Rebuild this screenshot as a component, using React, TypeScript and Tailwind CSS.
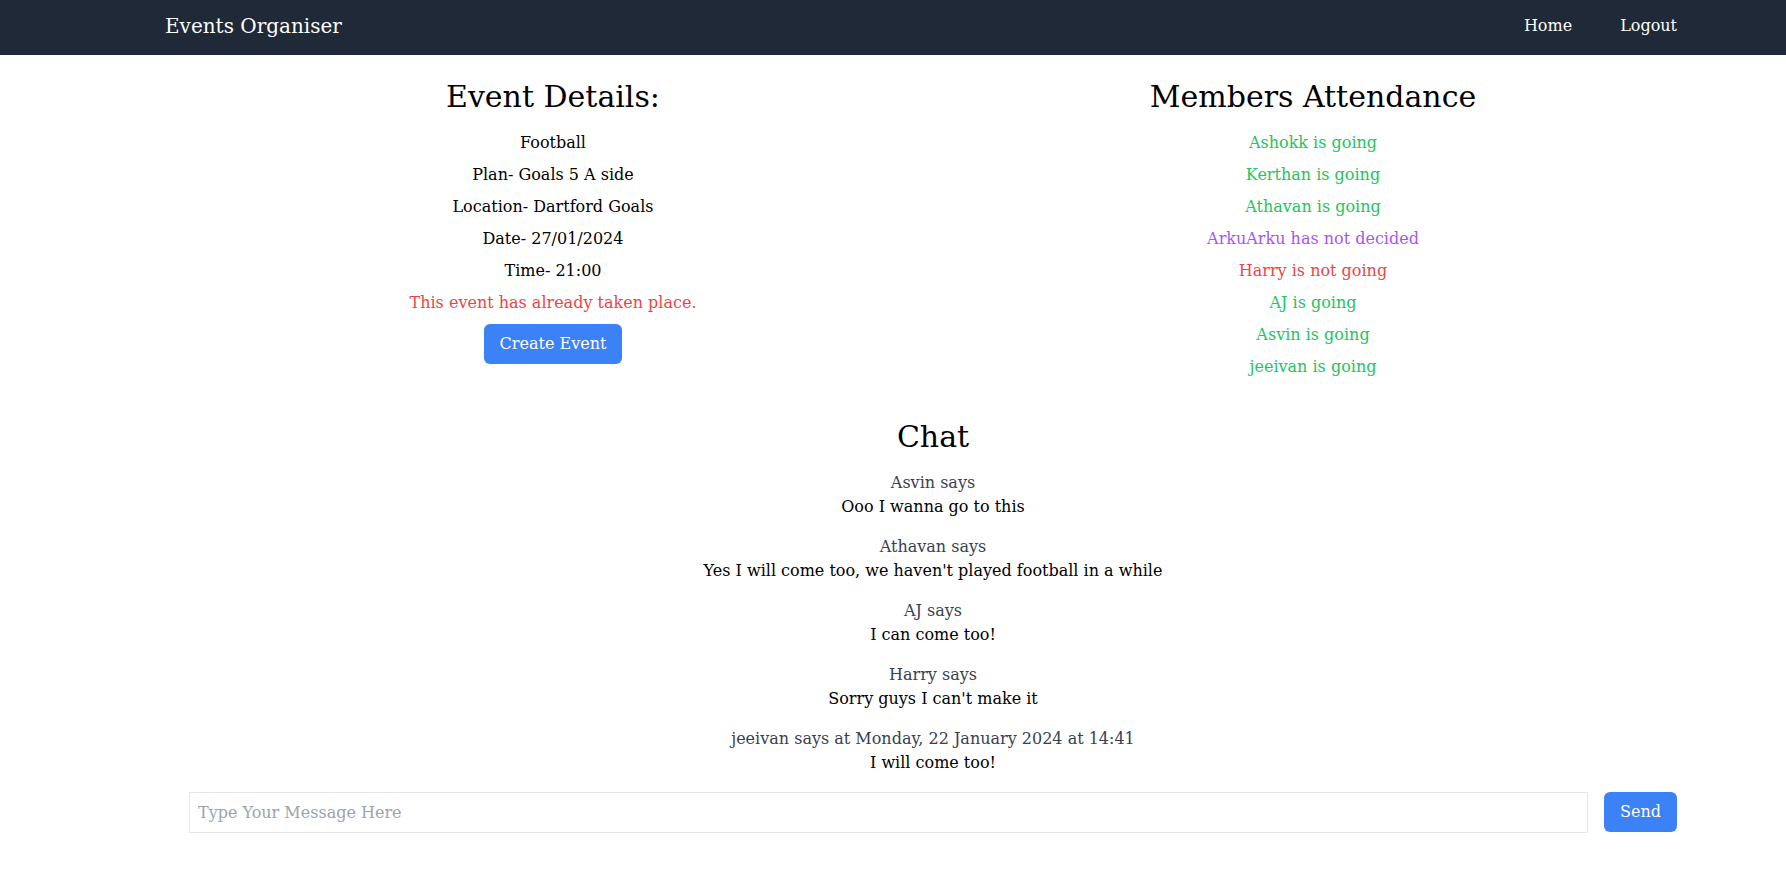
const details = [
  "Football",
  "Plan- Goals 5 A side",
  "Location- Dartford Goals",
  "Date- 27/01/2024",
  "Time- 21:00",
];

const attendance = [
  { text: "Ashokk is going", color: "text-[#22c55e]" },
  { text: "Kerthan is going", color: "text-[#22c55e]" },
  { text: "Athavan is going", color: "text-[#22c55e]" },
  { text: "ArkuArku has not decided", color: "text-[#a855f7]" },
  { text: "Harry is not going", color: "text-[#ef4444]" },
  { text: "AJ is going", color: "text-[#22c55e]" },
  { text: "Asvin is going", color: "text-[#22c55e]" },
  { text: "jeeivan is going", color: "text-[#22c55e]" },
];

const messages = [
  { from: "Asvin says", body: "Ooo I wanna go to this" },
  { from: "Athavan says", body: "Yes I will come too, we haven't played football in a while" },
  { from: "AJ says", body: "I can come too!" },
  { from: "Harry says", body: "Sorry guys I can't make it" },
  { from: "jeeivan says at Monday, 22 January 2024 at 14:41", body: "I will come too!" },
];

export default function App() {
  return (
    <div className="min-h-screen bg-white text-black font-['DejaVu_Serif',serif] text-base">
      <nav className="h-[55px] bg-[#1f2937] text-white">
        <div className="h-full flex items-center justify-between pl-[165px] pr-[93px] pb-1">
          <span className="text-xl">Events Organiser</span>
          <div className="flex gap-4">
            <a className="px-4">Home</a>
            <a className="px-4">Logout</a>
          </div>
        </div>
      </nav>

      <main className="ml-[173px] w-[1520px] pt-6">
        <div className="grid grid-cols-2">
          <section className="flex flex-col items-center">
            <h2 className="text-3xl mb-4">Event Details:</h2>
            <div className="flex flex-col items-center gap-2">
              {details.map((d) => (
                <p key={d}>{d}</p>
              ))}
              <p className="text-[#ef4444]">This event has already taken place.</p>
              <button className="mt-[1px] h-10 px-4 rounded-md bg-[#3b82f6] text-white">Create Event</button>
            </div>
          </section>
          <section className="flex flex-col items-center">
            <h2 className="text-3xl mb-4">Members Attendance</h2>
            <div className="flex flex-col items-center gap-2">
              {attendance.map((a) => (
                <p key={a.text} className={a.color}>
                  {a.text}
                </p>
              ))}
            </div>
          </section>
        </div>

        <section className="mt-10 flex flex-col items-center">
          <h2 className="text-3xl mb-4">Chat</h2>
          <div className="flex flex-col items-center gap-4">
            {messages.map((m) => (
              <div key={m.from} className="text-center">
                <p className="text-[#374151]">{m.from}</p>
                <p>{m.body}</p>
              </div>
            ))}
          </div>
        </section>

        <form className="mt-[17px] px-4 flex gap-4" onSubmit={(e) => e.preventDefault()}>
          <input
            type="text"
            placeholder="Type Your Message Here"
            className="flex-1 h-[41px] px-2 border border-[#e5e7eb] placeholder:text-[#9ca3af] outline-none"
          />
          <button type="submit" className="h-10 px-4 rounded-md bg-[#3b82f6] text-white">
            Send
          </button>
        </form>
      </main>
    </div>
  );
}
